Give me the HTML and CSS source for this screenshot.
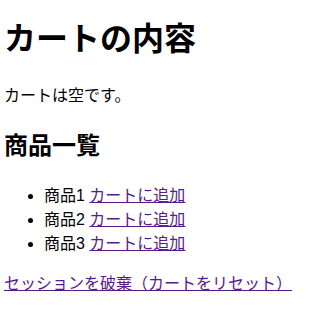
FILE: index.html
```html
<!DOCTYPE html>
<html lang="ja">
<head>
<meta charset="utf-8">
<link rel="stylesheet" href="styles.css">
</head>
<body>
<h1>カートの内容</h1>
<p>カートは空です。</p>
<h2>商品一覧</h2>
<ul>
<li>商品1 <a href="#" class="visited">カートに追加</a></li>
<li>商品2 <a href="#" class="visited">カートに追加</a></li>
<li>商品3 <a href="#" class="visited">カートに追加</a></li>
</ul>
<a href="#" class="visited">セッションを破棄（カートをリセット）</a>
</body>
</html>
```
FILE: styles.css
```css
body {
  margin: 0 4px;
  font-family: "Liberation Sans", "Noto Sans CJK JP", sans-serif;
  font-size: 16px;
  line-height: 1.5;
  color: #000;
  background: #fff;
}
h1 {
  font-size: 32px;
  margin: 15px 0 21.44px;
}
h2 {
  font-size: 24px;
  margin: 19.92px 0;
}
p {
  margin: 16px 0;
}
ul {
  margin: 16px 0;
  padding-left: 40px;
}
.visited {
  color: #551a8b;
}
```
